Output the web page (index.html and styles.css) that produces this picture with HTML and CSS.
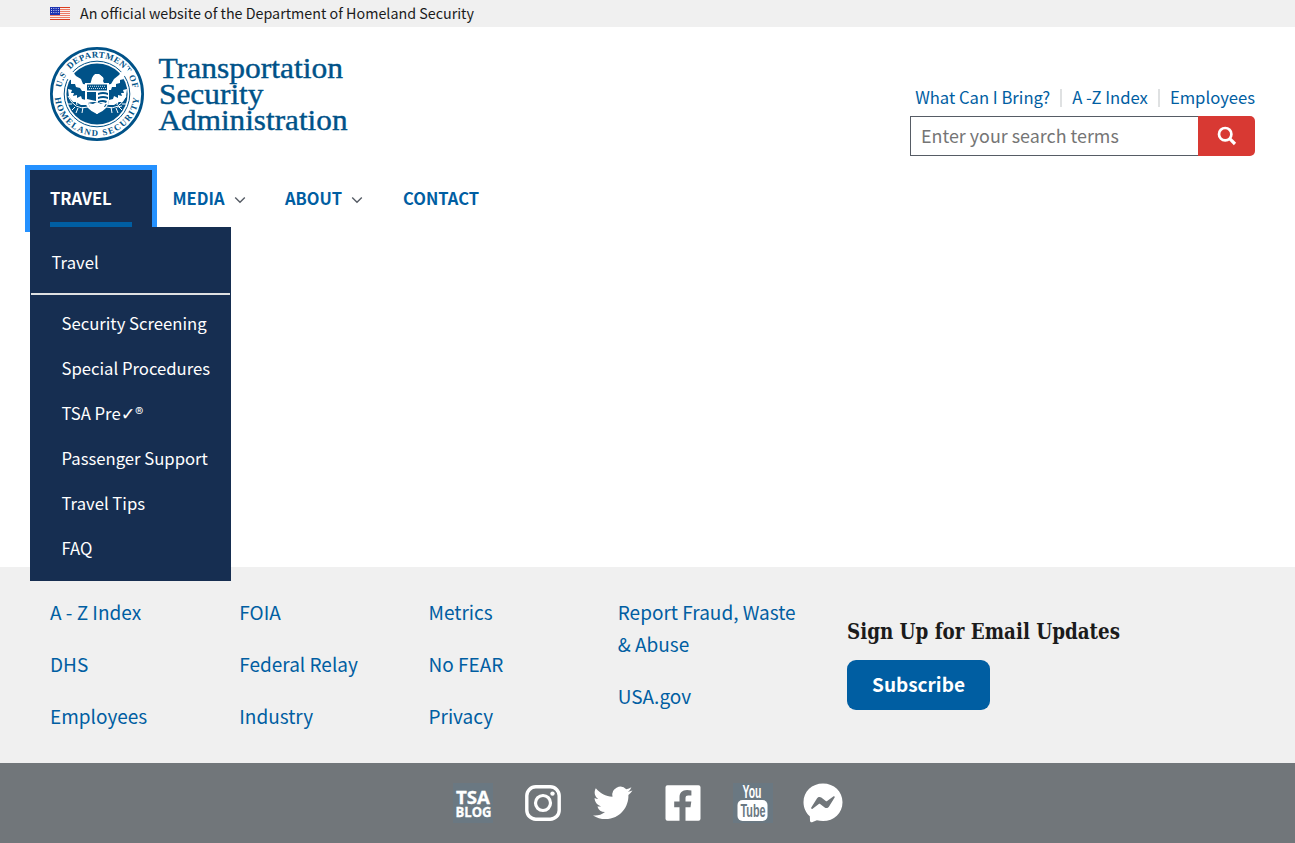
FILE: index.html
```html
<!DOCTYPE html>
<html lang="en">
<head>
<meta charset="utf-8">
<title>Transportation Security Administration</title>
<link rel="stylesheet" href="styles.css">
</head>
<body>
<div class="banner">
  <svg class="flag" viewBox="0 0 20 13"><rect width="20" height="13" fill="#fbeeea"/><path d="M0 2.500h20M0 4.500h20M0 6.500h20M0 8.500h20M0 10.500h20" stroke="#ec7a66" stroke-width="1.200"/><path d="M0 .5h20M0 12.500h20" stroke="#db3e1f"/><rect width="10" height="8" fill="#1e33b1"/><path d="M1 1.5h8M1 3.5h8M1 5.5h8" stroke="#c5cbf0" stroke-dasharray="1 1.3"/></svg>
  <span>An official website of the Department of Homeland Security</span>
</div>
<header class="header">
  <a class="logo" href="#">
    <svg width="300" height="96" viewBox="0 0 300 96" fill="#005288">
      <defs>
        <path id="arc-top" d="M11.500 40.700A36 36 0 0 1 82.800 42.500"/>
        <path id="arc-bottom" d="M4.900 50.700A42.300 42.300 0 0 0 89.100 50.700"/>
      </defs>
      <circle cx="47" cy="47" r="45.6" fill="#fff" stroke="#005288" stroke-width="2.8"/>
      <circle cx="47" cy="47" r="32.8" fill="none" stroke="#005288" stroke-width="1"/>
      <circle cx="47" cy="47" r="30.6"/>
      <text class="seal-text"><textPath href="#arc-top" textLength="102">U.S. DEPARTMENT OF</textPath></text>
      <text class="seal-text"><textPath href="#arc-bottom" textLength="124">HOMELAND SECURITY</textPath></text>
      <path fill="#fff" d="M17 20l5 4 4 5 5 3 2 5 7 1 2-7 3-4h5l4 4-1 3 2 4 6-1 3-5 5-4 4-5 6-3-3 8-3 2 1 2-4 1 0 3-4 1 0 3-4 0-1 3-4 0-1 13-4 7-5 4-5-4-5-6-1-13-4 0-2-3-4-1-1-3-4 0 0-4-4-1 0-3-3-2z"/>
      <path d="M33 21q14-5 28 0l4 6-5 6-5 2-2-5-4-3h-5l-4 4-2 4-5-3-4-6z"/>
      <path fill="#fff" d="M42 34l1-5 3-2 4 1 2 3-3-1-1 5zM18 42l4 1-1 3 3 0-1 3 4-1 0 3 4-2 1 3 4 1 1 5-6 0-5-3-3 0-4-5zM77 42l-4 1 1 3-3 0 1 3-4-1 0 3-4-2-1 3-4 1-1 5 6 0 5-3 3 0 4-5z"/>
      <path fill="#fff" d="M35 36h24v17q0 9-12 14-12-5-12-14z"/>
      <path d="M37 37.5h20v6H37zM37 45h9v9l-9-2zM48 46q5-2 10 0v2q-5-2-10 0zM48 50q5-2 10 0v2q-5-2-10 0zM48 54q5-2 9 0l-1 2q-4-2-8 0zM38 56q6-2 12 0t7 1l-2 3H40z"/>
      <path stroke="#fff" stroke-width=".8" stroke-dasharray="1 1" d="M38 39.3h18M39 41.5h17"/>
      <path fill="#fff" d="M38 56l5 1 4-2 4 2 5-1-3 6-3 1-3 4-3-4-3-1z"/>
      <path fill="none" stroke="#fff" stroke-width="1" d="M38 60Q25 64 18 49m4 8l-4 0m7 3l-3 3m6-2l-2 5m7-6l-1 6m-8-12l-3-4m6 8l-1-5M56 60Q69 64 76 49m-4 8l4 0m-7 3l3 3m-6-2l2 5m-7-6l1 6m8-12l3-4m-6 8l1-5m-1 7l5-1"/>
      <g class="wordmark">
        <text x="108.5" y="31" textLength="184.500" lengthAdjust="spacingAndGlyphs">Transportation</text>
        <text x="109" y="57" textLength="104.500" lengthAdjust="spacingAndGlyphs">Security</text>
        <text x="108.5" y="83" textLength="189" lengthAdjust="spacingAndGlyphs">Administration</text>
      </g>
    </svg>
  </a>
  <div class="tools">
    <nav class="quick"><a href="#">What Can I Bring?</a><a href="#">A -Z Index</a><a href="#">Employees</a></nav>
    <form class="search">
      <input class="search-input" type="text" placeholder="Enter your search terms">
      <button class="search-btn" type="button" aria-label="Search"><svg width="20" height="20" viewBox="0 0 20 20" fill="none" stroke="#fff"><circle cx="8.2" cy="8.2" r="6.2" stroke-width="2.7"/><path d="M12.7 12.7l5.3 5.3" stroke-width="3.2"/></svg></button>
    </form>
  </div>
</header>
<main class="main">
  <nav class="nav">
    <div class="nav-item nav-travel">
      <a class="nav-link" href="#">TRAVEL</a>
      <div class="menu">
        <a class="menu-head" href="#">Travel</a>
        <ul class="menu-list">
          <li>Security Screening</li><li>Special Procedures</li><li>TSA Pre<span class="check">✓</span>®</li><li>Passenger Support</li><li>Travel Tips</li><li>FAQ</li>
        </ul>
      </div>
    </div>
    <a class="nav-item nav-media" href="#">MEDIA<svg class="chev" viewBox="0 0 12 8"><path d="M1.2 1.5L6 6.2l4.800-4.700"/></svg></a>
    <a class="nav-item nav-about" href="#">ABOUT<svg class="chev" viewBox="0 0 12 8"><path d="M1.2 1.5L6 6.2l4.800-4.700"/></svg></a>
    <a class="nav-item nav-contact" href="#">CONTACT</a>
  </nav>
</main>
<footer>
  <div class="links">
    <div class="col"><a href="#">A - Z Index</a><a href="#">DHS</a><a href="#">Employees</a></div>
    <div class="col"><a href="#">FOIA</a><a href="#">Federal Relay</a><a href="#">Industry</a></div>
    <div class="col"><a href="#">Metrics</a><a href="#">No FEAR</a><a href="#">Privacy</a></div>
    <div class="col"><a href="#">Report Fraud, Waste<br>&amp; Abuse</a><a href="#">USA.gov</a></div>
    <div class="signup">
      <svg class="signup-title" width="290" height="32"><text x="0" y="24.500" textLength="273" lengthAdjust="spacingAndGlyphs">Sign Up for Email Updates</text></svg>
      <button class="subscribe" type="button">Subscribe</button>
    </div>
  </div>
  <div class="social">
    <svg viewBox="0 0 40 40"><rect width="40" height="40" fill="#6a7882"/><g class="blog"><text x="3" y="20.500" font-size="18.500" textLength="34" lengthAdjust="spacingAndGlyphs">TSA</text><text x="2.500" y="33.500" font-size="13.500" textLength="36" lengthAdjust="spacingAndGlyphs">BLOG</text></g></svg>
    <svg viewBox="0 0 40 40" fill="none" stroke="#fff"><rect x="3.800" y="3.800" width="32.400" height="32.400" rx="9" stroke-width="3.400"/><circle cx="20" cy="20" r="7.500" stroke-width="3.200"/><circle cx="29.500" cy="10.600" r="2.200" fill="#fff" stroke="none"/></svg>
    <svg viewBox="0 0 40 40" fill="#fff"><path d="M39.500 7.500a16 16 0 0 1-4.600 1.300 8 8 0 0 0 3.500-4.500 16 16 0 0 1-5.100 2A8.100 8.100 0 0 0 19.500 13.700C12.800 13.400 6.800 10.200 2.800 5.300c-2.200 3.700-1.100 8.500 2.500 10.800a8 8 0 0 1-3.700-1c0 3.900 2.700 7.400 6.500 8.100a8 8 0 0 1-3.700.2 8.100 8.100 0 0 0 7.600 5.600A16.300 16.300 0 0 1 0 32.400a23 23 0 0 0 12.400 3.600c15 0 23.500-12.700 23-24.100a16.500 16.500 0 0 0 4.100-4.400z"/></svg>
    <svg viewBox="0 0 40 40"><path fill="#fff" d="M4.500 2.300h31a2 2 0 0 1 2 2v31.400a2 2 0 0 1-2 2H22.500V24.200h5l.8-5.600h-5.800v-3.300c0-2 .9-2.700 2.600-2.700h3.300V7.400q-2-.3-4.300-.3c-5 0-7.600 2.800-7.600 7.500v4h-5.300v5.600h5.300v13.500H4.500a2 2 0 0 1-2-2V4.300a2 2 0 0 1 2-2z"/></svg>
    <svg viewBox="0 0 40 40"><rect width="40" height="40" fill="#6a7882"/><rect x="4.500" y="17" width="30" height="21" rx="5" fill="#fff"/><g class="yt"><text x="9.500" y="15" font-size="18" fill="#fff" textLength="19" lengthAdjust="spacingAndGlyphs">You</text><text x="7.500" y="33.500" font-size="18" fill="#6a7882" textLength="25" lengthAdjust="spacingAndGlyphs">Tube</text></g></svg>
    <svg viewBox="0 0 40 40"><path fill="#fff" d="M20 .5C9 .5 .500 8.500 .500 19.200c0 5.700 2.400 10.600 6.300 14l.2 4.200c.1 1.600 1.300 2.200 2.600 1.700l4.300-1.900c2 .6 4 .8 6.100.8 11 0 19.500-8 19.500-18.800S31 .500 20 .500z"/><path fill="#71767a" d="M8.300 24.500l5.800-9.200c1-1.400 2.800-1.700 4.200-.7l4.500 3.500c.4.300.9.300 1.300 0l6.200-4.700c.8-.6 1.900.300 1.300 1.200l-5.700 9.100c-1 1.400-2.900 1.700-4.200.7l-4.600-3.400c-.4-.3-.9-.3-1.300 0l-6.200 4.700c-.8.600-1.900-.400-1.300-1.200z"/></svg>
  </div>
</footer>
</body>
</html>
```
FILE: styles.css
```css
* { box-sizing: border-box; }
body { margin: 0; font-family: "Noto Sans CJK SC", sans-serif; font-size: 19px; color: #1b1b1b; background: #fff; }
a { color: #005ea2; text-decoration: none; }
.banner { height: 27px; background: #f0f0f0; padding-left: 50px; display: flex; align-items: center; gap: 10px; font-size: 14.300px; line-height: 25px; white-space: nowrap; }
.banner span { padding-bottom: 2px; }
.flag { width: 20px; height: 13px; }
.header { height: 138px; padding: 20px 40px 0 50px; display: flex; justify-content: space-between; }
.logo svg { display: block; }
.seal-text { font: 700 8.800px "Liberation Serif", serif; }
.wordmark { font: 29px "Liberation Serif", serif; stroke: #005288; stroke-width: .4; }
.tools { width: 345px; padding-top: 38px; }
.quick { display: flex; justify-content: flex-end; height: 24px; align-items: center; font-size: 16.650px; line-height: 24px; white-space: nowrap; }
.quick a + a { margin-left: 10px; padding-left: 12px; background: linear-gradient(#dfe1e2, #dfe1e2) 0 4px / 2px 18px no-repeat; }
.search { margin-top: 7px; display: flex; height: 40px; }
.search-input { flex: 1; min-width: 0; border: 1px solid #565c65; border-right: 0; padding: 0 10px 2px; font: 17.900px "Noto Sans CJK SC", sans-serif; background: #fff; }
.search-input::placeholder { color: #757575; }
.search-btn { width: 57px; border: 0; border-radius: 0 5px 5px 0; background: #d83933; display: flex; align-items: center; justify-content: center; padding: 0; }
.main { height: 402px; padding: 5px 30px 0; }
.nav { display: flex; height: 57px; line-height: 57px; font-weight: 700; font-size: 16.500px; white-space: nowrap; }
.nav-item { padding-left: 20px; }
.nav-travel { width: 122px; position: relative; background: #162e51; outline: 5px solid #2491ff; padding-right: 20px; }
.nav-travel .nav-link { display: block; height: 57px; color: #fff; border-bottom: 5px solid #005ea2; }
.nav-media { width: 113px; padding-left: 20.500px; }
.nav-about { width: 118px; }
.chev { width: 12px; height: 8px; margin: 0 0 1px 9px; fill: none; stroke: #565c65; stroke-width: 1.400; }
.menu { position: absolute; left: 0; top: 57px; width: 201px; height: 354px; background: #162e51; z-index: 2; color: #fff; font-weight: 400; font-size: 16.680px; padding: 0 1px; }
.menu-head { display: block; height: 68px; line-height: 71px; padding-left: 20.500px; color: #fff; border-bottom: 2px solid #dfe1e2; }
.menu-list { list-style: none; margin: 0; padding: 6px 0 0 30.500px; line-height: 45px; }
.menu-list li { height: 45px; }
.check { font: 17.500px/1 "DejaVu Sans", sans-serif; }
.links { height: 196px; background: #f0f0f0; padding: 29px 40px 0 50px; display: flex; }
.col { width: 189.250px; display: flex; flex-direction: column; gap: 20px; line-height: 32px; white-space: nowrap; }
.signup { padding: 18px 0 0 40px; }
.signup-title { display: block; font: 700 22.500px "DejaVu Serif Condensed", "DejaVu Serif", serif; fill: #1b1b1b; overflow: visible; }
.subscribe { display: block; margin-top: 14px; width: 143px; height: 50px; border: 0; border-radius: 9px; background: #005ea2; color: #fff; font: 700 19px "Noto Sans CJK SC", sans-serif; padding: 0 0 3px; }
.social { height: 80px; background: #71767a; display: flex; gap: 30px; justify-content: center; align-items: center; }
.social svg { width: 40px; height: 40px; overflow: visible; }
.blog { font-family: "Open Sans", sans-serif; font-weight: 700; fill: #fff; stroke: #fff; stroke-width: .3; }
.yt { font-family: "Liberation Sans", sans-serif; font-weight: 700; }
```
